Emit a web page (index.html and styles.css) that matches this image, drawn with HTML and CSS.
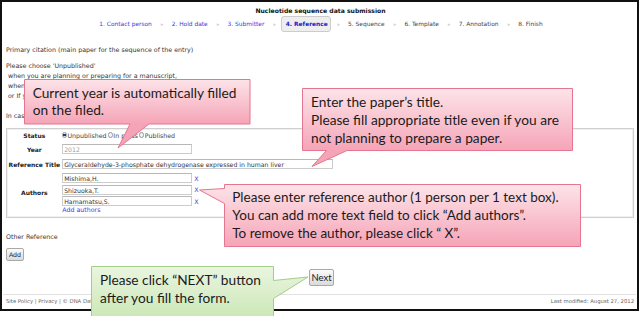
FILE: index.html
```html
<!DOCTYPE html>
<html lang="en">
<head>
    <meta charset="UTF-8">
    <title>Nucleotide sequence data submission - Reference</title>
    <link rel="stylesheet" href="styles.css">
</head>
<body>

    <div class="frame">
        <div class="header">
            <div class="title">Nucleotide sequence data submission</div>
            <ul class="steps">
                <li class="done">1. Contact person</li>
                <li class="sep">»</li>
                <li class="done">2. Hold date</li>
                <li class="sep">»</li>
                <li class="done">3. Submitter</li>
                <li class="sep">»</li>
                <li class="current">4. Reference</li>
                <li class="sep">»</li>
                <li>5. Sequence</li>
                <li class="sep">»</li>
                <li>6. Template</li>
                <li class="sep">»</li>
                <li>7. Annotation</li>
                <li class="sep">»</li>
                <li>8. Finish</li>
            </ul>
        </div>

        <div class="main">
            <p class="lead">Primary citation (main paper for the sequence of the entry)</p>
            <p class="note">Please choose 'Unpublished'<br>
                &nbsp;when you are planning or preparing for a manuscript,<br>
                &nbsp;when you have submitted a manuscript to a journal,<br>
                &nbsp;or If you don't plan to publish the paper.</p>
            <p class="note second">In case of 'In press' or 'Published', please fill in the journal information.</p>

            <div class="ref-box">
                <div class="row row-status">
                    <div class="label">Status</div>
                    <div class="field radios">
                        <span class="radio checked"></span><span class="opt">Unpublished</span>
                        <span class="radio"></span><span class="opt">In press</span>
                        <span class="radio"></span><span class="opt">Published</span>
                    </div>
                </div>
                <div class="row row-year">
                    <div class="label">Year</div>
                    <div class="field"><span class="input short muted">2012</span></div>
                </div>
                <div class="row row-title">
                    <div class="label">Reference Title</div>
                    <div class="field"><span class="input wide">Glyceraldehyde-3-phosphate dehydrogenase expressed in human liver</span></div>
                </div>
                <div class="row row-authors">
                    <div class="label">Authors</div>
                    <div class="field author-list">
                        <div class="author"><span class="input short">Mishima,H.</span><span class="remove">X</span></div>
                        <div class="author"><span class="input short">Shizuoka,T.</span><span class="remove">X</span></div>
                        <div class="author"><span class="input short">Hamamatsu,S.</span><span class="remove">X</span></div>
                        <a class="add-link">Add authors</a>
                    </div>
                </div>
            </div>

            <p class="other">Other Reference</p>
            <button class="btn btn-add">Add</button>
            <div class="next-row"><button class="btn btn-next">Next</button></div>
        </div>

        <div class="footer">
            <span>Site Policy | Privacy | © DNA Data Bank of Japan</span>
            <span>Last modified: August 27, 2012</span>
        </div>
    </div>

    <!-- Hinweis-Sprechblasen -->
    <svg class="balloons" width="640" height="316" viewBox="0 0 640 316">
        <defs>
            <linearGradient id="pink1" gradientUnits="userSpaceOnUse" x1="0" y1="79" x2="0" y2="124">
                <stop offset="0" stop-color="#fde4e9"/>
                <stop offset="1" stop-color="#f5a4b7"/>
            </linearGradient>
            <linearGradient id="pink2" gradientUnits="userSpaceOnUse" x1="0" y1="88" x2="0" y2="151">
                <stop offset="0" stop-color="#fde4e9"/>
                <stop offset="1" stop-color="#f5a4b7"/>
            </linearGradient>
            <linearGradient id="pink3" gradientUnits="userSpaceOnUse" x1="0" y1="184" x2="0" y2="247">
                <stop offset="0" stop-color="#fde4e9"/>
                <stop offset="1" stop-color="#f5a4b7"/>
            </linearGradient>
            <linearGradient id="green" gradientUnits="userSpaceOnUse" x1="0" y1="267" x2="0" y2="316">
                <stop offset="0" stop-color="#eaf5e0"/>
                <stop offset="1" stop-color="#cde8b8"/>
            </linearGradient>
        </defs>
        <path class="pink" fill="url(#pink1)" d="M24.5,79.5 H250 V124 H149 L118,148 L130,124 H24.5 Z"/>
        <path class="pink" fill="url(#pink2)" d="M302.5,88.5 H572.5 V150.5 H347 L312,166.5 L326.5,150.5 H302.5 Z"/>
        <path class="pink" fill="url(#pink3)" d="M224.5,184.5 H580.5 V246.5 H224.5 V203.5 L199.5,190 L224.5,188.5 Z"/>
        <path class="mint" fill="url(#green)" d="M91.5,266.5 H273.5 V280.5 L308,277 L273.5,298.5 V322 H91.5 Z"/>
    </svg>

    <div class="balloon-text b-year">Current year is automatically filled<br>on the filed.</div>
    <div class="balloon-text b-title">Enter the paper’s title.<br>Please fill appropriate title even if you are<br>not planning to prepare a paper.</div>
    <div class="balloon-text b-authors">Please enter reference author (1 person per 1 text box).<br>You can add more text field to click “Add authors”.<br>To remove the author, please click “ X”.</div>
    <div class="balloon-text b-next">Please click “NEXT” button<br>after you fill the form.</div>

</body>
</html>
```

FILE: styles.css
```css
        body, html {
            margin: 0;
            padding: 0;
            background-color: white;
            font-family: 'DejaVu Sans', Verdana, sans-serif;
            font-size: 6.3px;
            color: #333333;
        }

        .frame {
            box-sizing: border-box;
            width: 639px;
            height: 311px;
            border: 2px solid #111111;
            display: flex;
            flex-direction: column;
        }

        /* Kopfbereich mit Schritten */
        .header {
            padding-top: 4px;
            text-align: center;
        }

        .title {
            font-weight: bold;
            font-size: 6.1px;
            line-height: 10px;
            color: #111111;
            padding-left: 2px;
        }

        .steps {
            list-style: none;
            margin: 0;
            padding: 0 0 0 3px;
            height: 16px;
            display: flex;
            justify-content: center;
            align-items: center;
            gap: 5.4px;
            font-size: 5.9px;
            color: #444444;
        }

        .steps li {
            line-height: 14px;
            padding: 0 3px;
        }

        .steps .done {
            color: #3b3bdc;
        }

        .steps .current {
            color: #2020c8;
            font-weight: bold;
            background-color: #eeeeee;
            border: 1px solid #cccccc;
            border-radius: 3px;
            padding: 0 2.5px 0 3.5px;
        }

        .steps .sep {
            color: #aaaaaa;
            font-size: 5px;
            padding: 0;
        }

        /* Inhalt */
        .main {
            flex: 1;
            padding: 0 3px 0 4px;
        }

        .main p {
            margin: 0;
            line-height: 10px;
        }

        .lead {
            margin-top: 12.5px !important;
        }

        .note {
            margin-top: 6.5px !important;
        }

        .note.second {
            margin-top: 9.7px !important;
        }

        .ref-box {
            margin-top: 7px;
            border: 1px solid #cfcfcf;
            box-shadow: inset 0 0 0 1px #f0f0f0;
        }

        .row {
            display: grid;
            grid-template-columns: 54.7px 1fr;
            align-items: center;
        }

        .row-status { height: 13px; }
        .row-year { height: 15px; }
        .row-title { height: 15px; }

        .label {
            text-align: center;
            font-weight: bold;
            font-size: 6px;
            color: #222222;
        }

        .field {
            display: flex;
            align-items: center;
        }

        .radios .radio {
            width: 3.4px;
            height: 3.4px;
            border-radius: 50%;
            border: 0.6px solid #9a9a9a;
            background-color: #f2f2f2;
        }

        .radios .radio.checked {
            background: radial-gradient(circle, #2c3e66 45%, #dfe4ee 60%);
        }

        .radios .opt {
            margin: 0 1px 0 0.3px;
            color: #444444;
        }

        .input {
            box-sizing: border-box;
            display: block;
            height: 10.6px;
            line-height: 9px;
            border: 1px solid #cccccc;
            border-top-color: #b8b8b8;
            padding: 0 1.5px;
            color: #333333;
            white-space: nowrap;
            overflow: hidden;
            background-color: white;
            font-size: 6.2px;
        }

        .input.short { width: 130px; }
        .input.wide { width: 271.5px; }
        .input.muted { color: #a0a0a0; }

        .row-authors {
            align-items: center;
            padding-bottom: 3.2px;
        }

        .author-list {
            flex-direction: column;
            align-items: flex-start;
            padding-top: 0.2px;
        }

        .author {
            display: flex;
            align-items: center;
            margin-top: 1.4px;
        }

        .author .input {
            height: 10px;
        }

        .remove {
            color: #3b3bdc;
            margin-left: 2.6px;
        }

        .add-link {
            color: #3b3bdc;
            line-height: 8px;
            padding-left: 0.5px;
        }

        .other {
            margin-top: 13.4px !important;
        }

        .btn {
            display: block;
            box-sizing: border-box;
            font-family: 'DejaVu Sans', Verdana, sans-serif;
            border: 1px solid #a9a9a9;
            border-radius: 2px;
            background: linear-gradient(#fbfbfb, #dadada);
            color: #222222;
            padding: 0;
        }

        .btn-add {
            margin-top: 6.6px;
            width: 18px;
            height: 13px;
            font-size: 6.3px;
        }

        .next-row {
            display: flex;
            justify-content: center;
            margin-top: 7.7px;
            padding-left: 3px;
        }

        .btn-next {
            width: 25px;
            height: 16.7px;
            font-family: 'Lato', sans-serif;
            font-size: 9.5px;
        }

        .footer {
            border-top: 1px solid #e2e2e2;
            margin: 0 1px;
            padding: 2.5px 2px 0 3px;
            display: flex;
            justify-content: space-between;
            font-size: 5.3px;
            line-height: 7px;
            color: #666666;
            height: 15px;
            box-sizing: border-box;
        }

        /* Sprechblasen über der Seite */
        .balloons {
            position: absolute;
            left: 0;
            top: 0;
        }

        .balloons .pink {
            stroke: #e4768f;
            stroke-width: 1;
        }

        .balloons .mint {
            stroke: #a2ce85;
            stroke-width: 1;
        }

        .balloon-text {
            position: absolute;
            font-family: 'Lato', 'Open Sans', sans-serif;
            font-size: 13.7px;
            line-height: 18px;
            color: #1b1b1b;
            white-space: nowrap;
        }

        .b-year { left: 32.7px; top: 83.5px; line-height: 17.7px; }
        .b-title { left: 311px; top: 92.6px; }
        .b-authors { left: 232.3px; top: 188.3px; font-size: 13.5px; }
        .b-next { left: 100px; top: 271.3px; line-height: 17.4px; }
```
